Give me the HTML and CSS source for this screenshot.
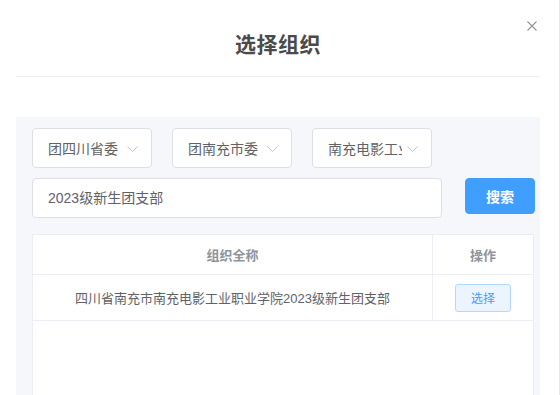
FILE: index.html
```html
<html>
  <head>
    <meta charset="utf-8" />
    <link rel="stylesheet" href="styles.css">
  </head>
  <body>
    <div class="page">
      <div class="dialog">
        <div class="dialog-header">
          <span class="dialog-title">选择组织</span>
          <svg class="close" width="10" height="10" viewBox="0 0 10 10">
            <path d="M0.5 0.5L9.5 9.5M9.5 0.5L0.5 9.5" stroke="#909399" stroke-width="1.1" fill="none" />
          </svg>
        </div>
        <div class="panel">
          <div class="filters">
            <div class="select">
              <span class="select-text">团四川省委</span>
              <svg class="arrow" width="11" height="6" viewBox="0 0 11 6"><path d="M0.5 0.5L5.5 5.5L10.5 0.5" stroke="#c0c4cc" fill="none" /></svg>
            </div>
            <div class="select">
              <span class="select-text">团南充市委</span>
              <svg class="arrow" width="11" height="6" viewBox="0 0 11 6"><path d="M0.5 0.5L5.5 5.5L10.5 0.5" stroke="#c0c4cc" fill="none" /></svg>
            </div>
            <div class="select">
              <span class="select-text">南充电影工业职业学院</span>
              <svg class="arrow" width="11" height="6" viewBox="0 0 11 6"><path d="M0.5 0.5L5.5 5.5L10.5 0.5" stroke="#c0c4cc" fill="none" /></svg>
            </div>
          </div>
          <div class="search-row">
            <div class="input">2023级新生团支部</div>
            <button class="btn-search">搜索</button>
          </div>
          <div class="table">
            <div class="tr thead">
              <div class="td col-name">组织全称</div>
              <div class="td col-op">操作</div>
            </div>
            <div class="tr">
              <div class="td col-name">四川省南充市南充电影工业职业学院2023级新生团支部</div>
              <div class="td col-op"><button class="btn-pick">选择</button></div>
            </div>
          </div>
        </div>
      </div>
    </div>
  </body>
</html>
```

FILE: styles.css
```css
body {
  margin: 0;
  background: #fff;
  font-family: "Liberation Sans", "Noto Sans CJK SC", sans-serif;
  overflow: hidden;
}

.page {
  width: 559px;
  height: 395px;
  border-right: 1px solid #e4e7ed;
}

.dialog {
  margin-left: 16px;
  width: 524px;
  height: 395px;
  display: flex;
  flex-direction: column;
}

.dialog-header {
  position: relative;
  height: 77px;
  flex-shrink: 0;
  border-bottom: 1px solid #ebeef5;
  display: flex;
  justify-content: center;
  align-items: center;
  padding-top: 10px;
  box-sizing: border-box;
}
.dialog-title {
  font-size: 21px;
  font-weight: bold;
  color: #4a4a4a;
  letter-spacing: 0.5px;
}
.close {
  position: absolute;
  top: 21px;
  right: 3px;
}

.panel {
  margin-top: 40px;
  background: #f5f7fa;
  padding: 11px 0 0 16px;
  flex: 1;
  display: flex;
  flex-direction: column;
  min-height: 0;
}

.filters {
  display: flex;
  gap: 20px;
}
.select {
  width: 120px;
  height: 40px;
  box-sizing: border-box;
  border: 1px solid #dcdfe6;
  border-radius: 4px;
  background: #fff;
  display: flex;
  align-items: center;
  padding-left: 15px;
  position: relative;
}
.select-text {
  width: 74px;
  overflow: hidden;
  white-space: nowrap;
  font-size: 14px;
  color: #606266;
}
.arrow {
  position: absolute;
  right: 13px;
  top: 17px;
}

.search-row {
  display: flex;
  align-items: flex-start;
  margin-top: 10px;
}
.input {
  width: 410px;
  height: 40px;
  box-sizing: border-box;
  border: 1px solid #dcdfe6;
  border-radius: 4px;
  background: #fff;
  padding-left: 15px;
  font-size: 14px;
  line-height: 38px;
  color: #606266;
}
.btn-search {
  margin-left: 23px;
  width: 70px;
  height: 36px;
  border: 1px solid #409eff;
  border-radius: 4px;
  background: #409eff;
  color: #fff;
  font-family: inherit;
  font-size: 14px;
  font-weight: bold;
  padding: 0;
}

.table {
  margin-top: 16px;
  width: 502px;
  flex: 1;
  box-sizing: border-box;
  background: #fff;
  border: 1px solid #ebeef5;
  border-bottom: none;
}
.tr {
  display: flex;
  border-bottom: 1px solid #ebeef5;
  height: 45px;
}
.thead {
  height: 39px;
}
.td {
  display: flex;
  align-items: center;
  justify-content: center;
  font-size: 13px;
  color: #606266;
}
.thead .td {
  font-weight: bold;
  color: #909399;
}
.col-name {
  width: 399px;
  border-right: 1px solid #ebeef5;
}
.col-op {
  flex: 1;
}
.btn-pick {
  width: 56px;
  height: 28px;
  border: 1px solid #b3d8ff;
  border-radius: 3px;
  background: #ecf5ff;
  color: #409eff;
  font-family: inherit;
  font-size: 12px;
  padding: 0;
}
```
